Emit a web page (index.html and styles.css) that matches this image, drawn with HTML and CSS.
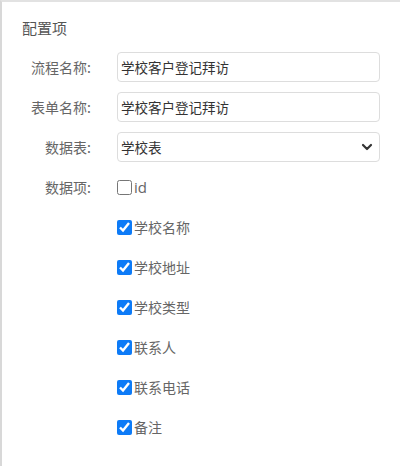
FILE: index.html
```html
<!DOCTYPE html>
<html lang="zh-CN">
<head>
  <meta charset="UTF-8">
  <meta name="viewport" content="width=device-width, initial-scale=1.0">
  <title>配置项</title>
  <link rel="stylesheet" href="styles.css">
</head>
<body>
  <div class="panel">
    <div class="panel-title">配置项</div>

    <!-- 基本信息 -->
    <div class="form-row">
      <label class="form-label">流程名称:</label>
      <input class="form-input" type="text" value="学校客户登记拜访">
    </div>
    <div class="form-row">
      <label class="form-label">表单名称:</label>
      <input class="form-input" type="text" value="学校客户登记拜访">
    </div>
    <div class="form-row">
      <label class="form-label">数据表:</label>
      <div class="select-box">
        <span>学校表</span>
        <svg class="select-arrow" width="12" height="8" viewBox="0 0 12 8">
          <path d="M2 2 L6 6 L10 2" fill="none" stroke="#333" stroke-width="2.2" stroke-linecap="round" stroke-linejoin="round"/>
        </svg>
      </div>
    </div>

    <!-- 数据项 -->
    <div class="form-row">
      <label class="form-label">数据项:</label>
      <label class="check-item"><input type="checkbox"><span class="latin">id</span></label>
    </div>
    <div class="form-row">
      <span class="form-label"></span>
      <label class="check-item"><input type="checkbox" checked><span>学校名称</span></label>
    </div>
    <div class="form-row">
      <span class="form-label"></span>
      <label class="check-item"><input type="checkbox" checked><span>学校地址</span></label>
    </div>
    <div class="form-row">
      <span class="form-label"></span>
      <label class="check-item"><input type="checkbox" checked><span>学校类型</span></label>
    </div>
    <div class="form-row">
      <span class="form-label"></span>
      <label class="check-item"><input type="checkbox" checked><span>联系人</span></label>
    </div>
    <div class="form-row">
      <span class="form-label"></span>
      <label class="check-item"><input type="checkbox" checked><span>联系电话</span></label>
    </div>
    <div class="form-row">
      <span class="form-label"></span>
      <label class="check-item"><input type="checkbox" checked><span>备注</span></label>
    </div>
  </div>
</body>
</html>
```

FILE: styles.css
```css
body {
  margin: 0;
  padding: 0;
  background: #fff;
  font-family: "Noto Sans CJK SC", "Noto Sans", sans-serif;
  color: #555;
}
.panel {
  height: 466px;
  box-sizing: border-box;
  border-top: 2px solid #e2e2e2;
  border-left: 2px solid #d8d8d8;
  padding: 14px 20px 0 20px;
}
.panel-title {
  font-size: 15px;
  line-height: 24px;
  color: #555;
  margin-bottom: 12px;
}
.form-row {
  display: flex;
  align-items: center;
  height: 30px;
  margin-bottom: 10px;
}
.form-label {
  width: 69px;
  flex: none;
  text-align: right;
  font-size: 14px;
  color: #666;
  margin-right: 26px;
}
.form-input, .select-box {
  width: 264px;
  height: 30px;
  box-sizing: border-box;
  border: 1px solid #ddd;
  border-radius: 4px;
  padding: 0 3px;
  font-family: "Noto Sans CJK SC", sans-serif;
  font-size: 13.5px;
  color: #333;
  outline: none;
}
.select-box {
  display: flex;
  align-items: center;
  justify-content: space-between;
  padding-right: 6px;
}
.check-item {
  display: flex;
  align-items: center;
  font-size: 14px;
  color: #666;
}
.check-item input {
  width: 15px;
  height: 15px;
  margin: 0 2px 0 0;
  accent-color: #0d7bf7;
}
.latin {
  font-family: "Open Sans", sans-serif;
  font-size: 15px;
}
```
